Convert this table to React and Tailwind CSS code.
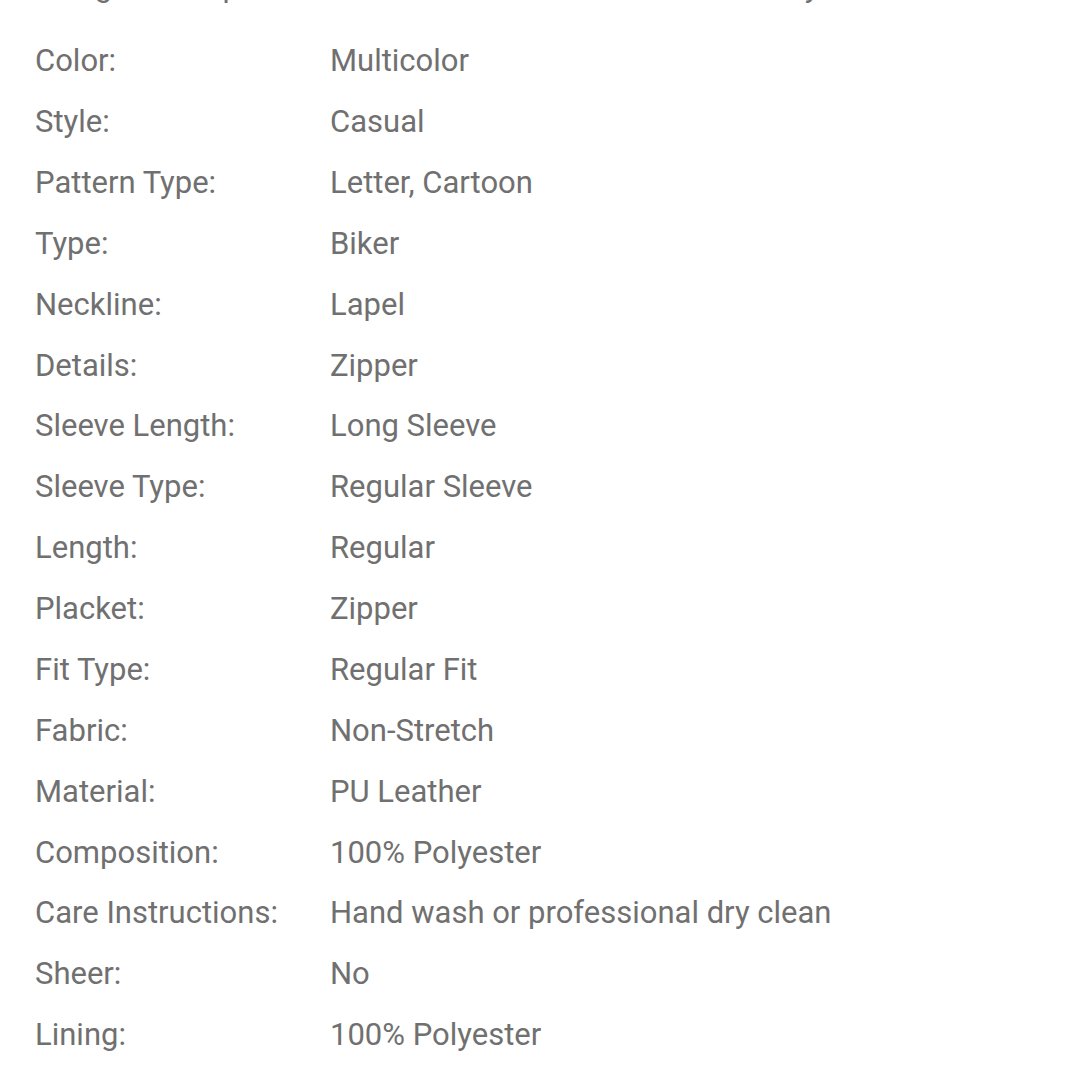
export default function App() {
  const rows = [
    ["Color:", "Multicolor"],
    ["Style:", "Casual"],
    ["Pattern Type:", "Letter, Cartoon"],
    ["Type:", "Biker"],
    ["Neckline:", "Lapel"],
    ["Details:", "Zipper"],
    ["Sleeve Length:", "Long Sleeve"],
    ["Sleeve Type:", "Regular Sleeve"],
    ["Length:", "Regular"],
    ["Placket:", "Zipper"],
    ["Fit Type:", "Regular Fit"],
    ["Fabric:", "Non-Stretch"],
    ["Material:", "PU Leather"],
    ["Composition:", "100% Polyester"],
    ["Care Instructions:", "Hand wash or professional dry clean"],
    ["Sheer:", "No"],
    ["Lining:", "100% Polyester"],
  ];
  return (
    <div className="w-[1080px] h-[1079px] bg-white overflow-hidden text-[#707070] text-[31px]" style={{ fontFamily: "Roboto, 'Liberation Sans', sans-serif" }}>
      <div className="h-[31px] overflow-hidden">
        <div className="flex -mt-[30px] leading-[34px]">
          <span className="ml-[95px]">g</span>
          <span className="ml-[110px]">p</span>
          <span className="ml-[565px]">y</span>
        </div>
      </div>
      <div className="flex flex-col">
        {rows.map(([k, v]) => (
          <div key={k} className="flex h-[60.875px] items-center">
            <div className="w-[330px] pl-[35px] shrink-0">{k}</div>
            <div>{v}</div>
          </div>
        ))}
      </div>
    </div>
  );
}
